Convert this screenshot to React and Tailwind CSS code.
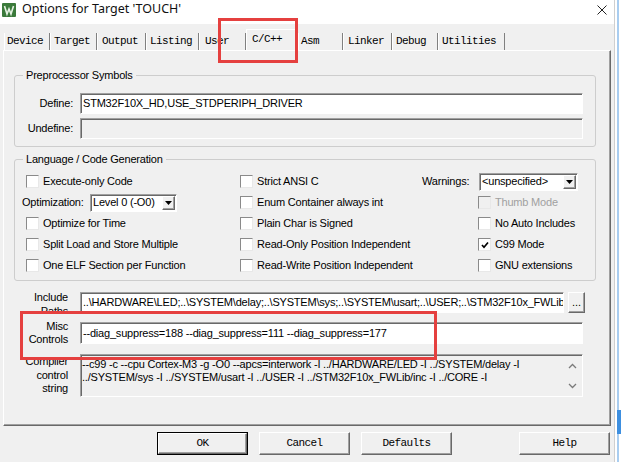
import React from 'react';

// 3D edges, Windows classic style
const sunken = 'border border-t-[#a0a0a0] border-l-[#a0a0a0] border-r-white border-b-white shadow-[inset_1px_1px_0_#696969]';
const raised = 'border border-t-white border-l-white border-r-[#696969] border-b-[#696969] shadow-[inset_-1px_-1px_0_#a0a0a0] bg-[#f0f0f0]';
const mono = "font-['Liberation_Mono',monospace] text-[11px] tracking-[-0.6px]";

const tabs = [
  { label: 'Device', cls: 'w-[46px] pl-[2px]' },
  { label: 'Target', cls: 'w-[47px] pl-[3px]' },
  { label: 'Output', cls: 'w-[49px] pl-[4px]' },
  { label: 'Listing', cls: 'w-[53px] pl-[3px]' },
  { label: 'User', cls: 'w-[47px] pl-[5px]' },
  { label: 'C/C++', cls: 'w-[52px] pl-[5px]', active: true },
  { label: 'Asm', cls: 'w-[45px] pl-[2px]' },
  { label: 'Linker', cls: 'w-[49px] pl-[4px]' },
  { label: 'Debug', cls: 'w-[46px] pl-[3px]' },
  { label: 'Utilities', cls: 'w-[67px] pl-[3px]' },
];

function Check({ label, checked, disabled }) {
  return (
    <div className="flex items-center gap-[4px]">
      <span
        className={`w-[13px] h-[13px] flex items-center justify-center border border-t-[#8a8a8a] border-l-[#8a8a8a] border-r-[#e8e8e8] border-b-[#e8e8e8] ${disabled ? 'bg-[#f0f0f0]' : 'bg-white'}`}
      >
        {checked && (
          <svg width="8" height="8" viewBox="0 0 8 8">
            <path d="M1 4 L3 6.2 L7 1.5" stroke="#000" strokeWidth="1.7" fill="none" />
          </svg>
        )}
      </span>
      <span className={`whitespace-nowrap ${disabled ? 'text-[#a0a0a0]' : ''}`}>{label}</span>
    </div>
  );
}

function Combo({ value, cls }) {
  return (
    <div className={`${cls} h-[18px] flex items-center bg-white ${sunken} pl-[2px] pr-[1px]`}>
      <span className="flex-1 whitespace-nowrap overflow-hidden">{value}</span>
      <span className={`w-[13px] h-[14px] flex items-center justify-center ${raised}`}>
        <svg width="7" height="4" viewBox="0 0 7 4">
          <path d="M0 0 H7 L3.5 4 Z" fill="#000" />
        </svg>
      </span>
    </div>
  );
}

function Button({ label, main }) {
  return (
    <div className={`w-[91px] h-[23px] ${main ? 'border border-black' : ''}`}>
      <div className={`w-full h-full flex items-center justify-center ${raised} ${mono}`}>{label}</div>
    </div>
  );
}

export default function App() {
  return (
    <div className="relative w-[621px] h-[462px] flex bg-white overflow-hidden font-['Liberation_Sans',Arial,sans-serif] text-[11px] tracking-[-0.2px] text-black">
      {/* dialog window */}
      <div className="w-[615px] h-full flex flex-col bg-[#f0f0f0] border-r border-[#cfcfcf]">
        {/* title bar */}
        <div className="h-[24px] bg-white">
          <div className="h-[19px] flex items-center">
            <svg className="ml-[2px]" width="14" height="14" viewBox="0 0 14 14">
              <rect width="14" height="14" rx="1" fill="#3b7a3b" />
              <path d="M2.5 3 L5 11 L7 6 L9 11 L11.5 3" stroke="#e4f1e2" strokeWidth="1.6" fill="none" />
            </svg>
            <span className="ml-[6px] font-['Noto_Sans',sans-serif] text-[12.5px] tracking-normal text-[#111]">
              Options for Target 'TOUCH'
            </span>
            <svg className="ml-auto mr-[7px]" width="10" height="10" viewBox="0 0 10 10">
              <path d="M0.5 0.5 L9.5 9.5 M9.5 0.5 L0.5 9.5" stroke="#222" strokeWidth="1" />
            </svg>
          </div>
        </div>

        {/* tabs */}
        <div className={`h-[26px] flex items-end pl-[4px] ${mono}`}>
          {tabs.map((t) =>
            t.active ? (
              <div
                key={t.label}
                className={`${t.cls} h-[21px] pt-[2px] leading-[14px] border-t border-l border-r border-t-white border-l-white border-r-[#696969] whitespace-nowrap`}
              >
                {t.label}
              </div>
            ) : (
              <div
                key={t.label}
                className={`${t.cls} h-[17px] flex items-center border-l border-r border-l-white border-r-[#808080] whitespace-nowrap`}
              >
                {t.label}
              </div>
            )
          )}
        </div>

        {/* tab page */}
        <div className="ml-[3px] w-[608px] h-[376px] pl-[10px] pr-[14px] border-t border-l border-t-white border-l-white border-r border-b border-r-[#696969] border-b-[#696969] shadow-[inset_-1px_-1px_0_#a0a0a0]">
          <fieldset className="mt-[17px] border border-[#cdcdcd] rounded-[3px] pb-[7px]">
            <legend className="ml-[8px] px-[3px] leading-[14px]">Preprocessor Symbols</legend>
            <div className="grid grid-cols-[58px_minmax(0,1fr)] gap-x-[7px] gap-y-[4px] pt-[11px] pr-[12px] items-center">
              <span className="text-right">Define:</span>
              <div className={`h-[21px] bg-white flex items-center pl-[2px] ${sunken}`}>
                STM32F10X_HD,USE_STDPERIPH_DRIVER
              </div>
              <span className="text-right">Undefine:</span>
              <div className={`h-[21px] bg-[#f0f0f0] ${sunken}`}></div>
            </div>
          </fieldset>

          <fieldset className="mt-[5px] border border-[#cdcdcd] rounded-[3px] pb-[4px]">
            <legend className="ml-[8px] px-[3px] leading-[14px]">Language / Code Generation</legend>
            <div className="grid grid-cols-[214px_184px_1fr] auto-rows-[21px] items-center pt-[5px] pl-[11px]">
              <Check label="Execute-only Code" />
              <Check label="Strict ANSI C" />
              <div className="flex items-center -ml-[2px]">
                <span className="w-[57px]">Warnings:</span>
                <Combo value="<unspecified>" cls="w-[99px]" />
              </div>

              <div className="flex items-center -ml-[4px]">
                <span className="w-[68px]">Optimization:</span>
                <Combo value="Level 0 (-O0)" cls="w-[87px]" />
              </div>
              <Check label="Enum Container always int" />
              <div className="pl-[54px]"><Check label="Thumb Mode" disabled /></div>

              <Check label="Optimize for Time" />
              <Check label="Plain Char is Signed" />
              <div className="pl-[54px]"><Check label="No Auto Includes" /></div>

              <Check label="Split Load and Store Multiple" />
              <Check label="Read-Only Position Independent" />
              <div className="pl-[54px]"><Check label="C99 Mode" checked /></div>

              <Check label="One ELF Section per Function" />
              <Check label="Read-Write Position Independent" />
              <div className="pl-[54px]"><Check label="GNU extensions" /></div>
            </div>
          </fieldset>

          {/* include / misc / compiler string */}
          <div className="mt-[11px] mr-[13px] grid grid-cols-[54px_minmax(0,1fr)] gap-x-[12px]">
            <div className="h-[21px] overflow-hidden">
              <div className="-mt-[2px] text-right leading-[14px]">Include<br />Paths</div>
            </div>
            <div className="flex h-[21px] min-w-0">
              <div className={`flex-1 min-w-0 bg-white flex items-center pl-[2px] overflow-hidden whitespace-nowrap ${sunken}`}>
                ..\HARDWARE\LED;..\SYSTEM\delay;..\SYSTEM\sys;..\SYSTEM\usart;..\USER;..\STM32F10x_FWLib\inc;..\CORE
              </div>
              <div className={`ml-[4px] -mr-[2px] w-[17px] shrink-0 flex items-center justify-center tracking-normal ${raised}`}>...</div>
            </div>

            <div className="mt-[9px] h-[22px] flex items-center justify-end">
              <div className="text-right leading-[13px]">Misc<br />Controls</div>
            </div>
            <div className={`mt-[9px] h-[22px] min-w-0 bg-white flex items-center pl-[2px] whitespace-nowrap overflow-hidden ${sunken}`}>
              --diag_suppress=188 --diag_suppress=111 --diag_suppress=177
            </div>

            <div className="mt-[10px] pt-[1px] text-right leading-[13.5px]">Compiler<br />control<br />string</div>
            <div className={`mt-[10px] h-[43px] min-w-0 flex bg-[#f0f0f0] ${sunken}`}>
              <div className="flex-1 min-w-0 pt-[3px] pl-[1px] leading-[13px] whitespace-nowrap overflow-hidden">
                <div>--c99 -c --cpu Cortex-M3 -g -O0 --apcs=interwork -I ../HARDWARE/LED -I ../SYSTEM/delay -I</div>
                <div>../SYSTEM/sys -I ../SYSTEM/usart -I ../USER -I ../STM32F10x_FWLib/inc -I ../CORE -I</div>
              </div>
              <div className="w-[17px] shrink-0 flex flex-col items-center justify-between pt-[8px] pb-[7px] pr-[2px]">
                <svg width="9" height="6" viewBox="0 0 9 6">
                  <path d="M1 5 L4.5 1.5 L8 5" stroke="#7a7a7a" strokeWidth="1.3" fill="none" />
                </svg>
                <svg width="9" height="6" viewBox="0 0 9 6">
                  <path d="M1 1 L4.5 4.5 L8 1" stroke="#7a7a7a" strokeWidth="1.3" fill="none" />
                </svg>
              </div>
            </div>
          </div>
        </div>

        {/* dialog buttons */}
        <div className="mt-[6px] flex justify-end gap-[11px] pr-[4px]">
          <Button label="OK" main />
          <Button label="Cancel" />
          <Button label="Defaults" />
          <div className="ml-[56px]">
            <Button label="Help" />
          </div>
        </div>
      </div>

      {/* desktop edge behind window */}
      <div className="w-[6px] h-full flex pl-[2px]">
        <div className="w-[2px] h-full flex flex-col bg-[#a9cdf0]">
          <div className="h-[410px]"></div>
          <div className="h-[24px] w-[4px] bg-[#3d8fe0]"></div>
        </div>
      </div>

      {/* red annotation boxes */}
      <div className="absolute left-[218px] top-[18px] w-[80px] h-[45px] border-[3px] border-[#e5403f]"></div>
      <div className="absolute left-[20px] top-[311px] w-[417px] h-[49px] border-[3px] border-[#e5403f]"></div>
    </div>
  );
}
